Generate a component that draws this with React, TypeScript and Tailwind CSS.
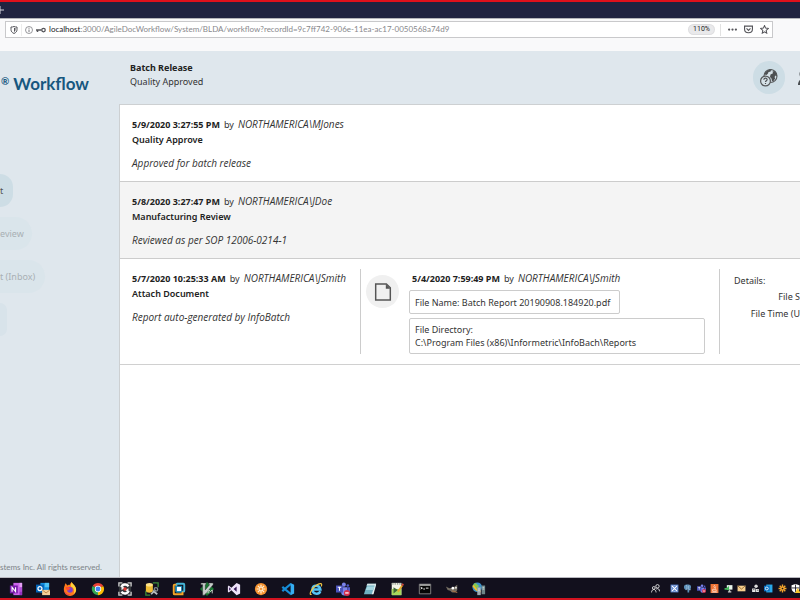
import type { ReactNode } from "react";

type HistoryEntry = {
  date: string;
  user: string;
  action: string;
  comment: string;
};

type IconProps = {
  children: ReactNode;
  className?: string;
};

function Icon({ children, className = "h-4 w-4" }: IconProps) {
  return (
    <svg viewBox="0 0 16 16" className={`shrink-0 ${className}`} fill="none" aria-hidden="true">
      {children}
    </svg>
  );
}

const history: HistoryEntry[] = [
  {
    date: "5/9/2020 3:27:55 PM",
    user: "NORTHAMERICA\\MJones",
    action: "Quality Approve",
    comment: "Approved for batch release",
  },
  {
    date: "5/8/2020 3:27:47 PM",
    user: "NORTHAMERICA\\JDoe",
    action: "Manufacturing Review",
    comment: "Reviewed as per SOP 12006-0214-1",
  },
];

const attachment: HistoryEntry = {
  date: "5/7/2020 10:25:33 AM",
  user: "NORTHAMERICA\\JSmith",
  action: "Attach Document",
  comment: "Report auto-generated by InfoBatch",
};

const navItems = [
  { label: "t", width: "w-[13px]", tone: "bg-[#cddde5] text-[#555]" },
  { label: "eview", width: "w-8", tone: "bg-[#dae5eb] text-[#a9b0b4]" },
  { label: "t (Inbox)", width: "w-[45px]", tone: "bg-[#dae5eb] text-[#a9b0b4]" },
  { label: "", width: "w-[7px]", tone: "bg-[#d8e3ea] text-[#a9b0b4]" },
];

const apps = [
  {
    name: "OneNote",
    art: (
      <>
        <path d="M5 1h10v14H5z" fill="#ca64ea" />
        <path d="M12 1h3v5h-3z" fill="#e3a0f5" />
        <path d="M12 6h3v5h-3z" fill="#b04fd6" />
        <path d="M12 11h3v4h-3z" fill="#9332bf" />
        <path d="M1 4h9v9H1z" fill="#7719aa" />
        <path d="M3.5 11V6l4 5V6" stroke="#fff" strokeWidth="1.3" />
      </>
    ),
  },
  {
    name: "Outlook",
    art: (
      <>
        <path d="M5 1h10v11H5z" fill="#1490df" />
        <path d="M10 1h5v5h-5z" fill="#50c4f5" />
        <path d="M0 3h9v9H0z" fill="#0364b8" />
        <circle cx="4.5" cy="7.5" r="2.3" stroke="#fff" strokeWidth="1.4" />
        <path d="M7 9h9v6H7z" fill="#f4cf98" />
        <path d="m7 9 4.500 3.500L16 9" stroke="#b98240" />
      </>
    ),
  },
  {
    name: "Firefox",
    art: (
      <>
        <path d="M2 4c0-1 .5-2 1-2.500L5 4c1-1 2-1 3-1 0-1 1-2 2-3 1 3 5 4 5 9a7 7 0 0 1-14 0c0-2 0-3 1-5Z" fill="#ff7a1a" />
        <path d="M10 0c1 3 5 4 5 9a7 7 0 0 1-3 5c2-5 0-8-3-9 0-2 0-3 1-5Z" fill="#ffd43a" />
        <path d="M1 8c1 5 5 7 9 6-3 2-8 1-9-6Z" fill="#f02b63" />
        <circle cx="8" cy="9" r="3.200" fill="#7b3fd0" />
        <path d="M3 6c3-1 4 1 6 1-1 1-2 1-3 3-2-1-3-2-3-4Z" fill="#ff4a32" />
      </>
    ),
  },
  {
    name: "Chrome",
    art: (
      <>
        <path d="M8 8 1.900 4.500A7 7 0 0 1 14 4.500Z" fill="#ea4335" />
        <path d="M8 8 1.900 4.500A7 7 0 0 0 8 15Z" fill="#34a853" />
        <path d="M8 8h0l6-3.500A7 7 0 0 1 8 15Z" fill="#fbbc05" />
        <circle cx="8" cy="8" r="3.600" fill="#fff" />
        <circle cx="8" cy="8" r="2.800" fill="#4285f4" />
      </>
    ),
  },
  {
    name: "Sync",
    art: (
      <>
        <path d="M1 1h14v14H1z" fill="#34373b" />
        <path d="M5 1H1v4M11 1h4v4M1 11v4h4M15 11v4h-4" stroke="#c9c9c9" strokeWidth="1.500" />
        <path d="M12 5C10 2 5 2 4 6M4 11c2 3 7 3 8-1" stroke="#fff" strokeWidth="2.800" />
        <path d="m4 4 4 3-4 2ZM12 12 8 9l4-2Z" fill="#eee" />
        <circle cx="8" cy="8" r="2" fill="#e23b35" />
      </>
    ),
  },
  {
    name: "Database tools",
    art: (
      <>
        <path d="M9 1h6v5M1 10v5h5" stroke="#3c8a39" strokeWidth="1.500" />
        <path d="M1 3v7c0 3 8 3 8 0V3Z" fill="#efbd35" />
        <ellipse cx="5" cy="3" rx="4" ry="2" fill="#ffe389" />
        <path d="m7 14 5-5M9 10l5 4" stroke="#b7bdc0" strokeWidth="2" />
        <circle cx="12.500" cy="8.500" r="2" stroke="#818b90" strokeWidth="1.500" />
      </>
    ),
  },
  {
    name: "VMware",
    art: (
      <>
        <rect x="5" y="2" width="9" height="9" rx="1" stroke="#45b6d8" strokeWidth="2.200" />
        <path d="M6 14H3a1 1 0 0 1-1-1V4a1 1 0 0 1 1-1h2M5 14h7v-3" stroke="#f4a528" strokeWidth="2.200" />
        <rect x="5" y="5" width="6" height="6" fill="#fff" stroke="#1686b2" strokeWidth="1.200" />
      </>
    ),
  },
  {
    name: "Vim",
    art: (
      <>
        <path d="m8 0 8 8-8 8-8-8Z" fill="#16772f" />
        <path d="M1 1h6v2H6v6l5-6h-1V1h5v2L5 15H3V3H1Z" fill="#c8cecc" stroke="#222" strokeWidth=".5" />
        <path d="M8 13V9m2 4V9l2 2 2-2v4" stroke="#ddd" />
      </>
    ),
  },
  {
    name: "Visual Studio",
    art: (
      <>
        <path d="m11 1 4 2v10l-4 2-6-5.500L2 12l-1-1V5l1-1 3 2.500Z" fill="#eee3fa" />
        <path d="m11 5-3.500 3 3.500 3ZM2.500 6v4L4.500 8Z" fill="#321553" />
      </>
    ),
  },
  {
    name: "Automation",
    art: (
      <>
        <circle cx="8" cy="8" r="7" fill="#f69432" />
        <path d="M8 3v10M3 8h10M4.500 4.500l7 7m0-7-7 7" stroke="#fff2d8" strokeWidth="1.400" />
        <circle cx="8" cy="8" r="1.300" fill="#f69432" />
      </>
    ),
  },
  {
    name: "VS Code",
    art: (
      <>
        <path d="M11.500 2 1.500 10.500M1.500 5.500l10 8.500" stroke="#168dd8" strokeWidth="2.500" />
        <path d="m11 1 4 2v10l-4 2Z" fill="#35adf1" />
      </>
    ),
  },
  {
    name: "Internet Explorer",
    art: (
      <>
        <path d="M13 10.500C11 15 4 14 4 8.500S12 3 13 8.500H5" stroke="#55c4f5" strokeWidth="2.800" />
        <path d="M3 14c-4 2 0-7 5-10 4-3 8-3 6 1" stroke="#f2c744" strokeWidth="1.300" />
      </>
    ),
  },
  {
    name: "Teams",
    art: (
      <>
        <circle cx="9" cy="3" r="2.300" fill="#7b83eb" />
        <circle cx="13.500" cy="4" r="1.500" fill="#5059c9" />
        <path d="M6 6h7v6a3.500 3.500 0 0 1-7 0Z" fill="#7b83eb" />
        <path d="M13 6h3v5h-3z" fill="#5059c9" />
        <path d="M0 4h8v8H0z" fill="#4b53bc" />
        <path d="M2 6h4M4 6v4" stroke="#fff" strokeWidth="1.200" />
        <circle cx="12.500" cy="12.500" r="3.500" fill="#d72e4b" />
        <path d="M10.500 12.500h4" stroke="#fff" strokeWidth="1.400" />
      </>
    ),
  },
  {
    name: "Notepad",
    art: (
      <>
        <path d="M5 2h10l-4 12H1Z" fill="#6fb0c2" />
        <path d="m10 14 4-12 1 1-3 11Z" fill="#e6f1f2" />
        <path d="M5 2h10l-1 2H4Z" fill="#d7e7e8" />
        <path d="M5 5h8l-1 4H3Z" fill="#a5d6e0" />
      </>
    ),
  },
  {
    name: "Notepad++",
    art: (
      <>
        <path d="M2 1h11v14H2z" fill="#f4f5e8" />
        <path d="M2 8h11v7H2z" fill="#a8d85c" />
        <path d="M2 2h11" stroke="#8c938b" strokeDasharray="1 1" strokeWidth="2" />
        <path d="m4 6 5 3-5 4Z" fill="#406838" />
        <path d="m9 11 5-7" stroke="#e5a829" strokeWidth="2" />
        <path d="m14 4 1-2" stroke="#d6493d" strokeWidth="2" />
      </>
    ),
  },
  {
    name: "Command Prompt",
    art: (
      <>
        <path d="M1.500 2.500h13v11h-13z" fill="#050505" stroke="#8b8b8b" />
        <path d="M2 3.500h12" stroke="#ccc" strokeWidth="1.500" />
        <path d="m3 6 2 1-2 1M6 8h2M9 7h3" stroke="#fff" />
      </>
    ),
  },
  {
    name: "GIMP",
    art: (
      <>
        <path d="m1 5 4 2 5-1 4-3v6c-2 4-6 4-8 1L3 9Z" fill="#746d62" />
        <circle cx="9" cy="7" r="1.500" fill="#fff" />
        <circle cx="12.500" cy="6.500" r="1.200" fill="#ddd" />
        <path d="m8 10 6 2" stroke="#a47147" strokeWidth="1.500" />
      </>
    ),
  },
  {
    name: "Server Manager",
    art: (
      <>
        <circle cx="6" cy="6" r="5.500" fill="#3b92c9" />
        <path d="M2 2c4-2 3 2 6 2L6 8C4 8 1 6 2 2Z" fill="#87c84e" />
        <path d="m1 4 4 5 5 2" stroke="#f5bf2a" strokeWidth="2" />
        <path d="M6 6h4v9H6z" fill="#9ba9ae" />
        <path d="M11 4h4v10h-4z" fill="#6d8587" />
        <path d="M7 8h2m3-2h2M7 10h2m3-2h2" stroke="#dce7e9" />
      </>
    ),
  },
];

const trayApps = [
  {
    name: "Display",
    art: (
      <>
        <path d="M1 1h14v14H1z" fill="#4f79c6" />
        <path d="m3 3 10 10m0-10L3 13" stroke="#fff" strokeWidth="2" />
        <path d="M6 3h4M6 13h4M3 6v4m10-4v4" stroke="#dce7ff" />
      </>
    ),
  },
  {
    name: "PostgreSQL",
    art: (
      <>
        <path d="M2 3c2-3 10-3 12 0 1 4-1 7-3 8v4H8V9l-3 2C2 9 1 6 2 3Z" fill="#5b8fb9" />
        <path d="M6 2c2 3 0 6 1 9M10 3v5c0 2 1 3 4 2" stroke="#c1d7e8" />
      </>
    ),
  },
  { name: "Teams status", art: apps[12].art },
  {
    name: "Java",
    art: (
      <>
        <path d="M1 0h14v16H1z" fill="#ef7435" />
        <path d="M9 2c-5 3 1 3-2 6M11 4c-4 2 0 3-2 5M4 10h7v3H5zM3 14.500h10" stroke="#fff" />
      </>
    ),
  },
  {
    name: "Remote session",
    art: (
      <>
        <path d="M5 2h10v8H5z" fill="#e9f5ec" />
        <path d="M10 10v4M7 14h6" stroke="#ccc" strokeWidth="2" />
        <path d="m8 4-3 3H1v3h5l3 2V4Z" fill="#41b85b" />
      </>
    ),
  },
  {
    name: "Mail",
    art: (
      <>
        <path d="M1 3h14v10H1z" fill="#f6cf8e" />
        <path d="m1 3 7 6 7-6" stroke="#8e632c" strokeWidth="1.500" />
      </>
    ),
  },
  {
    name: "Devices",
    art: (
      <>
        <circle cx="9" cy="4" r="3" fill="#ddd" />
        <path d="M2 8h6v6H2zM9 9h5v5H9z" fill="#e9e9e9" />
        <path d="M4 10h2m5 1h2" stroke="#333" strokeWidth="1.500" />
      </>
    ),
  },
  {
    name: "Outlook status",
    art: (
      <>
        <path d="M4 1h11v14H4z" fill="#28a8ea" />
        <path d="M0 3h10v10H0z" fill="#0a6fc2" />
        <circle cx="5" cy="8" r="2.600" stroke="#fff" strokeWidth="1.500" />
      </>
    ),
  },
  {
    name: "Automation status",
    art: (
      <>
        <path d="M8 1v14M1 8h14M3 3l10 10m0-10L3 13" stroke="#f3a42b" strokeWidth="2.500" />
        <circle cx="8" cy="8" r="1.500" fill="#12101d" />
      </>
    ),
  },
  {
    name: "Security",
    art: (
      <>
        <path d="m8 0 7 2v6c0 4-3 6-7 8-4-2-7-4-7-8V2Z" fill="#fff" />
        <path d="M8 1v14M1 7h14" stroke="#12101d" strokeWidth="1.500" />
        <path d="m12 7 5 9H7Z" fill="#f6c52f" />
      </>
    ),
  },
];

function BrowserBar() {
  return (
    <header className="shrink-0">
      <div className="flex h-[18px] items-center border-t-2 border-[#e0101b] bg-[#202340]">
        <button type="button" aria-label="New tab" className="text-white">
          <Icon className="-ml-1 h-2 w-2">
            <path d="M8 0v16M0 8h16" stroke="#d4d5dd" strokeWidth="2" />
          </Icon>
        </button>
      </div>
      <div className="flex h-[33px] items-start border-t border-[#b3b4ba] bg-[#f9f9fa] pt-[2px] pr-[27px] pl-[5px]">
        <div className="flex h-[17px] flex-1 items-center border border-[#c9c9cb] bg-white pr-[3px] pl-1 font-['Lato',sans-serif]">
          <Icon className="h-2 w-2">
            <path d="M8 1C6 2 4 2 2 2v5c0 4 2 6 6 8 4-2 6-4 6-8V2c-2 0-4 0-6-1Z" stroke="#55555a" strokeWidth="2" />
            <path d="M8 4v8c2-1 3-3 3-5V4Z" fill="#55555a" />
          </Icon>
          <span className="mx-[3px] h-3 border-l border-[#ececec]" />
          <Icon className="h-2 w-2">
            <circle cx="8" cy="8" r="7" stroke="#77777c" strokeWidth="1.500" />
            <path d="M8 7v5M8 3.500v2" stroke="#77777c" strokeWidth="2" />
          </Icon>
          <svg viewBox="0 0 20 12" className="mx-[3px] h-[6px] w-[10px]" fill="none" aria-hidden="true">
            <circle cx="15" cy="6" r="3.500" stroke="#55555a" strokeWidth="2.500" />
            <path d="M11 6H0M3 6v4" stroke="#55555a" strokeWidth="3" />
          </svg>
          <label htmlFor="address" className="text-[8px] leading-[15px] text-[#18181c]">
            localhost
          </label>
          <input
            id="address"
            readOnly
            className="min-w-0 flex-1 bg-transparent text-[8px] leading-[15px] text-[#88888c] outline-none"
            value=":3000/AgileDocWorkflow/System/BLDA/workflow?recordId=9c7ff742-906e-11ea-ac17-0050568a74d9"
          />
          <button type="button" className="h-[9px] w-[25px] rounded-full bg-[#e9e9eb] font-['Roboto',sans-serif] text-[7px] leading-[9px] text-[#222] ring-1 ring-[#dedee0]">
            110%
          </button>
          <span className="mr-[7px] ml-[6px] h-3 border-l border-[#e2e2e2]" />
          <button type="button" aria-label="Page actions">
            <Icon className="h-[9px] w-[9px]">
              <circle cx="2" cy="8" r="2" fill="#55555a" />
              <circle cx="8" cy="8" r="2" fill="#55555a" />
              <circle cx="14" cy="8" r="2" fill="#55555a" />
            </Icon>
          </button>
          <button type="button" aria-label="Save to Pocket" className="ml-[7px]">
            <Icon className="h-[9px] w-[9px]">
              <path d="M1 2h14v5c0 9-14 9-14 0Z" stroke="#55555a" strokeWidth="2" />
              <path d="m4.500 6 3.500 3.500L11.500 6" stroke="#55555a" strokeWidth="2" />
            </Icon>
          </button>
          <button type="button" aria-label="Bookmark" className="ml-[7px]">
            <Icon className="h-[9px] w-[9px]">
              <path d="m8 1 2 4.500 5 .5-4 3.500 1 5L8 12l-4 2.500 1-5L1 6l5-.5Z" stroke="#55555a" strokeWidth="1.800" />
            </Icon>
          </button>
        </div>
      </div>
    </header>
  );
}

function Sidebar() {
  return (
    <aside className="flex w-[119px] shrink-0 flex-col overflow-hidden">
      <div className="flex w-[89px] items-start justify-end pt-[21px] font-['Lato',sans-serif] text-[17px] leading-6 font-bold whitespace-nowrap text-[#17577f]">
        <span className="text-[10px] leading-[18px]">®</span>
        <span className="ml-1">Workflow</span>
      </div>
      <nav className="mt-[78px] flex flex-1 flex-col gap-[10px]">
        {navItems.map((item, index) => (
          <button
            key={index}
            type="button"
            aria-label={item.label || "More"}
            className={`flex h-[33px] items-center rounded-r-full whitespace-nowrap ${item.width} ${item.tone}`}
          >
            {item.label}
          </button>
        ))}
      </nav>
      <footer className="pb-[3px] font-['Lato',sans-serif] text-[8px] leading-[14px] whitespace-nowrap text-[#7c8387]">
        stems Inc. All rights reserved.
      </footer>
    </aside>
  );
}

function EntryHeading({ date, user }: { date: string; user: string }) {
  return (
    <p className="flex gap-1 whitespace-nowrap">
      <b className="text-[#222]">{date}</b>
      <span>by</span>
      <i className="font-['Open_Sans',sans-serif] text-[10px]">{user}</i>
    </p>
  );
}

function EntryText({ entry }: { entry: HistoryEntry }) {
  return (
    <>
      <EntryHeading date={entry.date} user={entry.user} />
      <h2 className="font-semibold text-[#222]">{entry.action}</h2>
      <p className="mt-[9px] font-['Open_Sans',sans-serif] text-[10px] italic">{entry.comment}</p>
    </>
  );
}

function AttachmentRow() {
  return (
    <article className="flex overflow-hidden border-b border-[#d0d0d0] py-[10px] pl-3">
      <div className="w-[229px] shrink-0 border-r border-[#ccc] pt-[2px]">
        <EntryText entry={attachment} />
      </div>
      <button
        type="button"
        aria-label="Open document"
        className="mt-[6px] ml-[5px] flex h-[33px] w-[33px] shrink-0 items-center justify-center rounded-full bg-[#f0f0f0]"
      >
        <Icon className="h-[18px] w-[18px]">
          <path d="M1.500.8h9.500l3.500 3.500v10.900h-13Z" stroke="#555" strokeWidth="1.300" />
          <path d="M10.500 1v4h4Z" fill="#555" />
        </Icon>
      </button>
      <div className="ml-[10px] w-[311px] shrink-0 border-r border-[#ccc] pt-[2px] pr-[14px]">
        <div className="pl-[3px]">
          <EntryHeading date="5/4/2020 7:59:49 PM" user="NORTHAMERICA\JSmith" />
        </div>
        <button type="button" className="mt-1 h-6 min-w-[211px] rounded-xs border border-[#ccc] px-[5px] text-left whitespace-nowrap">
          File Name: Batch Report 20190908.184920.pdf
        </button>
        <div className="mt-1 rounded-xs border border-[#ccc] px-[5px] py-1 leading-[13px]">
          <p>File Directory:</p>
          <p>C:\Program Files (x86)\Informetric\InfoBach\Reports</p>
        </div>
      </div>
      <dl className="ml-[14px] flex-1 pt-1 whitespace-nowrap">
        <dt>Details:</dt>
        <div className="flex flex-col items-end leading-[17px]">
          <dt>File S</dt>
          <dt>File Time (U</dt>
        </div>
      </dl>
    </article>
  );
}

function Taskbar() {
  return (
    <footer className="flex h-[23px] shrink-0 items-center justify-between overflow-hidden border-t border-b-2 border-t-[#b8b8bf] border-b-[#d31320] bg-[#12101d] pt-px pl-[9px]">
      <div className="flex w-[477px] items-center justify-between">
        {apps.map((app) => (
          <button key={app.name} type="button" aria-label={app.name}>
            <Icon className="h-[14px] w-[14px]">{app.art}</Icon>
          </button>
        ))}
      </div>
      <div className="flex items-center">
        <button type="button" aria-label="People" className="mr-[10px]">
          <Icon className="h-[9px] w-[9px]">
            <circle cx="5" cy="7" r="2.500" stroke="#eee" strokeWidth="1.500" />
            <path d="M1 15c0-7 8-7 8 0M9 9c4-2 6 0 6 4" stroke="#eee" strokeWidth="1.500" />
            <circle cx="11.500" cy="4" r="3" stroke="#eee" strokeWidth="1.500" />
          </Icon>
        </button>
        <div className="flex w-[130px] justify-between">
          {trayApps.map((app) => (
            <button key={app.name} type="button" aria-label={app.name}>
              <Icon className="h-[9px] w-[9px]">{app.art}</Icon>
            </button>
          ))}
        </div>
      </div>
    </footer>
  );
}

export default function App() {
  return (
    <div className="flex min-h-screen flex-col overflow-hidden bg-[#dfe7ed] font-['Noto_Sans',sans-serif] text-[9px] leading-[15px] text-[#333]">
      <BrowserBar />
      <div className="flex flex-1">
        <Sidebar />
        <div className="flex min-w-0 flex-1 flex-col">
          <header className="flex h-[53px] shrink-0 items-start justify-between overflow-hidden pl-[11px]">
            <div className="pt-[10px] leading-[14px]">
              <h1 className="font-bold text-[#222]">Batch Release</h1>
              <p>Quality Approved</p>
            </div>
            <div className="flex pt-[10px]">
              <button type="button" aria-label="Help" className="flex h-[33px] w-8 items-center justify-center rounded-full bg-[#cddde5]">
                <svg viewBox="0 0 18 18" className="h-[18px] w-[18px]" fill="none" aria-hidden="true">
                  <circle cx="10.500" cy="7" r="6.500" fill="#d5e1e7" stroke="#55585a" strokeWidth="1.100" />
                  <path d="M4.500 5.500C5 3 7.500.800 10 .800l1.500 1-1.500 1-1.500.2L8 4.500 6.500 6ZM10.500 5.500l2.500-1.300-.5-1.700 2.200-.5c1.500 1.500 2.300 3.500 2.200 5.500l-1.500-1-.8 1.500.5 1.500-1.600 2.500-1.500.3-.5-2.800-1.500-1.500Z" fill="#4d5052" />
                  <circle cx="5.500" cy="12" r="4.900" fill="#d5e1e7" stroke="#55585a" strokeWidth="1.200" />
                  <path d="M3.900 10.700c0-2.300 3.400-1.900 3.200 0-.1 1-1.600 1.100-1.600 2.300m0 .9v1.200" stroke="#4d5052" strokeWidth="1.200" />
                </svg>
              </button>
              <button type="button" aria-label="Account" className="ml-[13px] flex h-[33px] w-[2px] items-center overflow-hidden">
                <Icon className="h-4 w-4">
                  <circle cx="5" cy="4" r="3.500" fill="#484c4f" />
                  <path d="M0 15c0-8 10-8 10 0Z" fill="#484c4f" />
                </Icon>
              </button>
            </div>
          </header>
          <main className="flex-1 border-t border-l border-[#cdd0d2] bg-white">
            {history.map((entry) => (
              <article
                key={entry.date}
                className="border-b border-[#ccc] pt-3 pb-[10px] pl-3 even:bg-[#f4f4f4]"
              >
                <EntryText entry={entry} />
              </article>
            ))}
            <AttachmentRow />
          </main>
        </div>
      </div>
      <Taskbar />
    </div>
  );
}
